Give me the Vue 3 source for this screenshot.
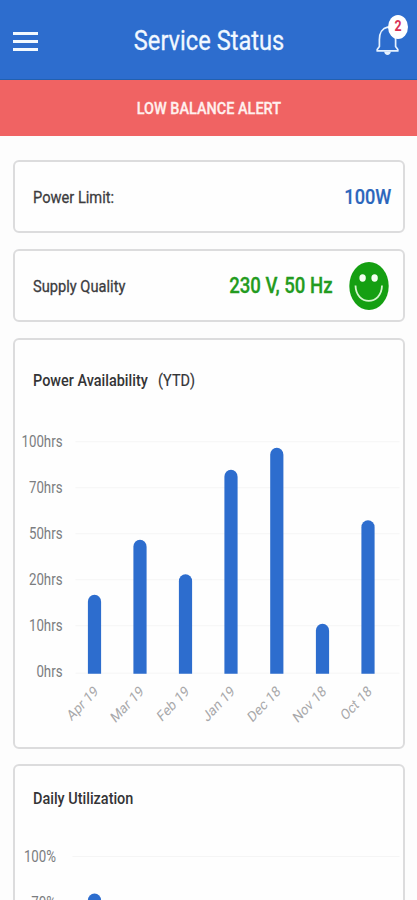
<script setup>
const yTicks = [
  { label: '100hrs', y: 104 },
  { label: '70hrs', y: 150 },
  { label: '50hrs', y: 196 },
  { label: '20hrs', y: 242 },
  { label: '10hrs', y: 288 },
  { label: '0hrs', y: 335.5, labelY: 334 },
]
const bars = [
  { label: 'Apr 19', x: 81, top: 257 },
  { label: 'Mar 19', x: 126.5, top: 202 },
  { label: 'Feb 19', x: 172, top: 236.5 },
  { label: 'Jan 19', x: 217.5, top: 132 },
  { label: 'Dec 18', x: 263.3, top: 110 },
  { label: 'Nov 18', x: 309, top: 286 },
  { label: 'Oct 18', x: 354.5, top: 182.5 },
]
const baseline = 336
const barPath = (b) =>
  `M${b.x - 6.6} ${baseline}V${b.top + 7}a6.6 7 0 0 1 13.2 0V${baseline}z`
</script>

<template>
  <div class="screen">
    <header class="topbar">
      <button class="menu" aria-label="Menu"><i /><i /><i /></button>
      <h1><span class="narrow center">Service Status</span></h1>
      <div class="bell">
        <svg width="26" height="34" viewBox="0 0 26 34">
          <path
            d="M2.2 27.9V26.4L4.4 23.5V16.5C4.4 10 7.5 5.2 12.6 4.2C17.7 5.2 20.6 10 20.6 16.5V23.5L22.8 26.4V27.9Z"
            fill="none" stroke="#e6f2ff" stroke-width="1.7" stroke-linejoin="round"
          />
          <path d="M9.2 28.6h6.6c0 4.6-6.6 4.6-6.6 0z" fill="#e6f2ff" />
        </svg>
        <span class="badge"><span class="narrow center">2</span></span>
      </div>
    </header>
    <div class="alert"><span class="narrow center">LOW BALANCE ALERT</span></div>
    <main>
      <section class="card row">
        <span class="label narrow">Power Limit:</span>
        <span class="value blue narrow end">100W</span>
      </section>
      <section class="card row quality">
        <span class="label narrow">Supply Quality</span>
        <span class="value green narrow end">230 V, 50 Hz</span>
        <svg class="smile" width="40" height="48" viewBox="0 0 40 48">
          <ellipse cx="20" cy="24" rx="19.7" ry="24" fill="#159f12" />
          <ellipse cx="13.6" cy="16" rx="3.2" ry="3.7" fill="#f4fff0" />
          <ellipse cx="25.6" cy="16" rx="3.2" ry="3.7" fill="#f4fff0" />
          <path d="M6.5 23.5C7 44 32.5 44 33 23.5" fill="none" stroke="#d4f5cc" stroke-width="1.8" />
        </svg>
      </section>
      <section class="card availability">
        <h2><span class="narrow">Power Availability</span><em class="narrow">(YTD)</em></h2>
        <svg class="chart" width="385" height="404" viewBox="1.5 2.3 385 404">
          <g v-for="t in yTicks" :key="t.label">
            <line x1="62" x2="386" :y1="t.y" :y2="t.y" stroke="#f5f5f5" />
            <text class="tick" :transform="`translate(49 ${(t.labelY ?? t.y) + 5.3}) scale(.83 1)`">{{ t.label }}</text>
          </g>
          <g v-for="b in bars" :key="b.label">
            <path :d="barPath(b)" fill="#2d6dce" />
            <text class="month" :transform="`translate(${b.x + 4.5} 355) scale(.83 1) rotate(-41)`">{{ b.label }}</text>
          </g>
        </svg>
      </section>
      <section class="card daily">
        <h2><span class="narrow">Daily Utilization</span></h2>
        <svg class="chart" width="385" height="200" viewBox="1.5 2 385 200">
          <line x1="59" x2="386" y1="92.5" y2="92.5" stroke="#f5f5f5" />
          <text class="tick" transform="translate(42.5 98.3) scale(.83 1)">100%</text>
          <text class="tick" transform="translate(42.5 143.5) scale(.83 1)">70%</text>
          <path d="M74.4 200V136.5a6.6 7 0 0 1 13.2 0V200z" fill="#2d6dce" />
        </svg>
      </section>
    </main>
  </div>
</template>

<style>
body { margin: 0; overflow: hidden; }
</style>

<style scoped>
* { box-sizing: border-box; }
.screen {
  width: 417px;
  height: 900px;
  overflow: hidden;
  background: #fdfdfd;
  font-family: Roboto, sans-serif;
}
.narrow {
  display: inline-block;
  white-space: pre;
  transform: scaleX(.85);
  transform-origin: left center;
}
.center { transform-origin: center; }
.end { transform-origin: right center; }
.topbar {
  position: relative;
  display: flex;
  align-items: center;
  height: 80px;
  padding: 0 9px 0 13px;
  background: #2d6dce;
  border-bottom: 1px solid #2260b0;
}
.menu {
  display: flex;
  flex-direction: column;
  gap: 5px;
  width: 25px;
  padding: 0;
  margin-top: 4px;
  border: 0;
  background: none;
}
.menu i { height: 3px; background: #f2f9ff; }
h1 {
  flex: 1;
  margin: 0 0 0 5px;
  padding-top: 1px;
  text-align: center;
  font-size: 28px;
  font-weight: 400;
  color: #f1f8ff;
  -webkit-text-stroke: .3px #f1f8ff;
}
h1 .narrow { transform: scaleX(.845); }
.bell { position: relative; width: 33px; height: 40px; }
.bell svg { display: block; margin-top: 3px; }
.badge {
  position: absolute;
  top: -5px;
  left: 13px;
  width: 20px;
  height: 24px;
  border-radius: 50%;
  background: #fff;
  color: #d72f55;
  font-size: 14.5px;
  font-weight: 700;
  line-height: 24px;
  text-align: center;
}
.alert {
  display: flex;
  align-items: center;
  justify-content: center;
  height: 56px;
  background: #f06363;
  color: #fff0ee;
  font-size: 17px;
  font-weight: 500;
  -webkit-text-stroke: .3px #fff0ee;
}
main {
  display: flex;
  flex-direction: column;
  gap: 16px;
  padding: 24px 12px 0 13px;
}
.card {
  flex: none;
  border: 2px solid #dcdcdd;
  border-radius: 6px;
  background: #fefefe;
}
.row {
  display: flex;
  align-items: center;
  height: 73px;
  padding: 0 12px 0 18px;
}
.quality { padding-right: 14.5px; }
.label {
  font-size: 17px;
  color: #3c3c3e;
  font-weight: 400;
  transform: scaleX(.862);
  -webkit-text-stroke: .3px #3c3c3e;
}
.value { margin-left: auto; font-size: 21px; font-weight: 500; transform: scaleX(.865); }
.blue { color: #2b66bc; -webkit-text-stroke: .2px #2b66bc; }
.green { color: #239b20; font-size: 21.5px; -webkit-text-stroke: .3px #239b20; }
.smile { margin-left: 16px; }
.availability { height: 410.5px; }
.daily { height: 240px; margin-top: -.5px; }
h2 {
  display: flex;
  height: 0;
  margin: 0;
  padding-left: 18px;
  font-size: 17px;
  font-weight: 500;
  line-height: 20px;
  color: #343436;
}
h2 span { width: 125px; }
.availability h2 .narrow { margin-top: 30px; }
.daily h2 .narrow { margin-top: 22px; }
em { font-style: normal; font-weight: 400; -webkit-text-stroke: .2px #343436; }
.chart { display: block; }
.tick { font-size: 16px; fill: #7b7d80; text-anchor: end; }
.month { font-size: 15px; fill: #a8a8aa; text-anchor: end; }
</style>
